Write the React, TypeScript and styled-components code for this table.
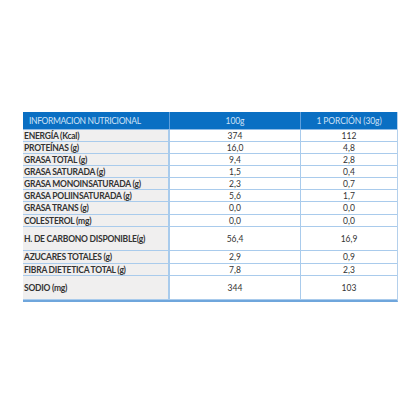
import styled, { createGlobalStyle } from "styled-components";

const GlobalStyle = createGlobalStyle`
    html, body {
        margin: 0;
        padding: 0;
        background: #ffffff;
    }
`;

const Page = styled.div`
    width: 416px;
    height: 416px;
    padding: 112px 0 0 23px;
    box-sizing: border-box;
    font-family: Lato, "Open Sans", sans-serif;
`;

const Table = styled.div`
    width: 374px;
    border-right: 1px solid #b4d0ec;
    border-bottom: 2px solid #6fa6dc;
`;

const Row = styled.div<{ $height: number }>`
    display: grid;
    grid-template-columns: 147px 131px 96px;
    height: ${(p) => p.$height}px;
    box-sizing: border-box;
    border-bottom: 1px solid #a9cbec;
`;

const HeaderRow = styled(Row)`
    background: #0a6fc3;
    border-bottom: 1px solid #8fbbe6;
`;

const HeaderCell = styled.div<{ $align?: string }>`
    display: flex;
    align-items: center;
    justify-content: ${(p) => p.$align || "center"};
    padding-left: ${(p) => (p.$align ? "6px" : "0")};
    font-size: 8.5px;
    letter-spacing: ${(p) => (p.$align ? "-0.35px" : "-0.1px")};
    color: #cfe2f6;
    border-right: 1px solid #5f9fdc;
    &:last-child {
        border-right: none;
    }
`;

const Label = styled.div`
    display: flex;
    align-items: center;
    padding-left: 1px;
    background: #f0efef;
    border-right: 2px solid #a9cbec;
    font-size: 8.5px;
    font-weight: 700;
    color: #333333;
    white-space: nowrap;
    letter-spacing: -0.25px;
`;

const Value = styled.div`
    display: flex;
    align-items: center;
    justify-content: center;
    font-size: 8.5px;
    color: #333333;
    border-right: 1px solid #a9cbec;
    &:last-child {
        border-right: none;
    }
`;

const rows = [
    { label: "ENERGÍA (Kcal)", a: "374", b: "112", h: 12 },
    { label: "PROTEÍNAS (g)", a: "16,0", b: "4,8", h: 12 },
    { label: "GRASA TOTAL (g)", a: "9,4", b: "2,8", h: 12 },
    { label: "GRASA SATURADA (g)", a: "1,5", b: "0,4", h: 12 },
    { label: "GRASA MONOINSATURADA (g)", a: "2,3", b: "0,7", h: 12 },
    { label: "GRASA POLIINSATURADA (g)", a: "5,6", b: "1,7", h: 12 },
    { label: "GRASA TRANS (g)", a: "0,0", b: "0,0", h: 13 },
    { label: "COLESTEROL (mg)", a: "0,0", b: "0,0", h: 12 },
    { label: "H. DE CARBONO DISPONIBLE(g)", a: "56,4", b: "16,9", h: 24 },
    { label: "AZUCARES TOTALES (g)", a: "2,9", b: "0,9", h: 13 },
    { label: "FIBRA DIETETICA TOTAL (g)", a: "7,8", b: "2,3", h: 12 },
    { label: "SODIO (mg)", a: "344", b: "103", h: 24 },
];

export default function App() {
    return (
        <Page>
            <GlobalStyle />
            <Table>
                <HeaderRow $height={18}>
                    <HeaderCell $align="flex-start">INFORMACION NUTRICIONAL</HeaderCell>
                    <HeaderCell>100g</HeaderCell>
                    <HeaderCell>1 PORCIÓN (30g)</HeaderCell>
                </HeaderRow>
                {rows.map((row) => (
                    <Row $height={row.h} key={row.label}>
                        <Label>{row.label}</Label>
                        <Value>{row.a}</Value>
                        <Value>{row.b}</Value>
                    </Row>
                ))}
            </Table>
        </Page>
    );
}
